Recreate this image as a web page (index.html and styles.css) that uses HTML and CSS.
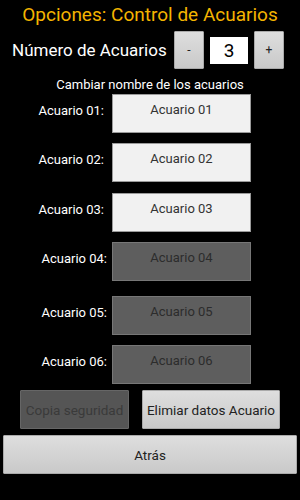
FILE: index.html
```html
<!DOCTYPE html>
<html>
<head>
<meta charset="utf-8">
<link rel="stylesheet" href="styles.css">
</head>
<body>
<div class="screen">
  <div class="title">Opciones: Control de Acuarios</div>
  <div class="count-row">
    <div class="count-label">Número de Acuarios</div>
    <div class="btn small">-</div>
    <div class="count-box">3</div>
    <div class="btn small">+</div>
  </div>
  <div class="subtitle">Cambiar nombre de los acuarios</div>
  <div class="rows">
    <div class="row r1"><div class="lbl">Acuario 01:</div><div class="field">Acuario 01</div></div>
    <div class="row r2"><div class="lbl">Acuario 02:</div><div class="field">Acuario 02</div></div>
    <div class="row r3"><div class="lbl">Acuario 03:</div><div class="field">Acuario 03</div></div>
    <div class="row r4 off"><div class="lbl">Acuario 04:</div><div class="field">Acuario 04</div></div>
    <div class="row r5 off"><div class="lbl">Acuario 05:</div><div class="field">Acuario 05</div></div>
    <div class="row r6 off"><div class="lbl">Acuario 06:</div><div class="field">Acuario 06</div></div>
  </div>
  <div class="actions">
    <div class="btn dis copia">Copia seguridad</div>
    <div class="btn elim">Elimiar datos Acuario</div>
  </div>
  <div class="btn back">Atrás</div>
</div>
</body>
</html>
```
FILE: styles.css
```css
html, body {
  margin: 0;
  padding: 0;
  background: #000;
}
body {
  width: 300px;
  height: 500px;
  font-family: Roboto, "Noto Sans", sans-serif;
  color: #fff;
}
.screen {
  display: flex;
  flex-direction: column;
}
.title {
  height: 29px;
  line-height: 29px;
  text-align: center;
  color: #f4b400;
  font-size: 19px;
}
.count-row {
  display: flex;
  align-items: center;
  margin-top: 2px;
  height: 38px;
}
.count-label {
  margin-left: 12px;
  width: 162px;
  font-size: 17px;
  white-space: nowrap;
}
.btn {
  box-sizing: border-box;
  display: flex;
  align-items: center;
  justify-content: center;
  background: linear-gradient(#dedede, #c9c9c9);
  border: 1px solid #aaa;
  border-radius: 1px;
  color: #222;
  font-size: 13.5px;
  white-space: nowrap;
}
.btn.small {
  width: 30px;
  height: 38px;
  font-size: 12px;
}
.count-box {
  box-sizing: border-box;
  width: 38px;
  height: 27px;
  margin: 0 6px;
  background: #fff;
  color: #000;
  font-size: 19px;
  display: flex;
  align-items: center;
  justify-content: center;
}
.subtitle {
  margin-top: 7px;
  height: 18px;
  line-height: 18px;
  text-align: center;
  font-size: 13px;
}
.rows {
  display: flex;
  flex-direction: column;
}
.row {
  display: flex;
  align-items: center;
  height: 39px;
}
.r2, .r4, .r6 { margin-top: 10px; }
.r3 { margin-top: 11px; }
.r5 { margin-top: 15px; }
.lbl {
  width: 104px;
  text-align: right;
  font-size: 13px;
  white-space: nowrap;
  padding-bottom: 6px;
}
.field {
  box-sizing: border-box;
  width: 139px;
  height: 39px;
  margin-left: 8px;
  background: #f1f1f1;
  border: 1px solid #9a9a9a;
  color: #333;
  font-size: 13px;
  display: flex;
  align-items: center;
  justify-content: center;
  padding-bottom: 8px;
}
.off .lbl { width: 107px; }
.off .field {
  margin-left: 5px;
  background: #5e5e5e;
  border-color: #777;
  color: #2c2c2c;
}
.actions {
  display: flex;
  margin-top: 6px;
  height: 39px;
}
.copia {
  margin-left: 20px;
  width: 109px;
  height: 39px;
  background: #555;
  border-color: #666;
  color: #3a3a3a;
}
.elim {
  margin-left: 13px;
  width: 138px;
  height: 39px;
}
.back {
  margin: 6px 0 0 3px;
  width: 294px;
  height: 39px;
}
```
